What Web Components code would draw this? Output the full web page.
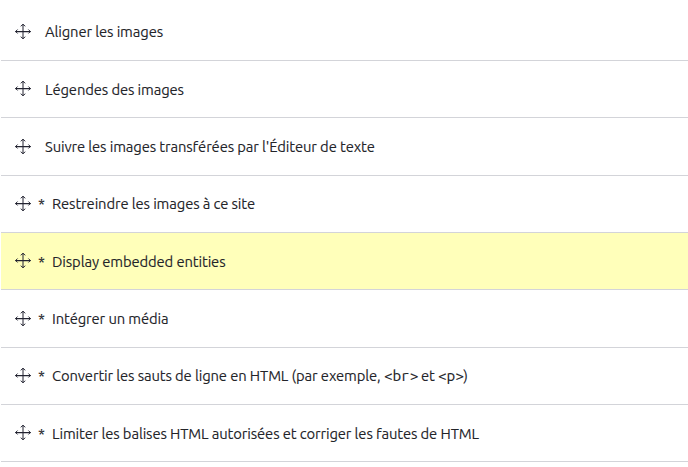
<!DOCTYPE html>
<html lang="fr">
<head>
<meta charset="utf-8">
<title>Filtres</title>
<style>
body{margin:0;background:#fff;color:#232429;font:14.8px/20px Ubuntu,"Noto Sans","Open Sans",sans-serif;letter-spacing:-.12px;-webkit-text-stroke:.1px #232429}
</style>
</head>
<body>
<filter-list>
<filter-row>Aligner les images</filter-row>
<filter-row low>Légendes des images</filter-row>
<filter-row>Suivre les images transférées par l'Éditeur de texte</filter-row>
<filter-row changed>Restreindre les images à ce site</filter-row>
<filter-row changed low active>Display embedded entities</filter-row>
<filter-row changed>Intégrer un média</filter-row>
<filter-row changed>Convertir les sauts de ligne en HTML (par exemple, <code-tag>&lt;br&gt;</code-tag> et <code-tag>&lt;p&gt;</code-tag>)</filter-row>
<filter-row changed low>Limiter les balises HTML autorisées et corriger les fautes de HTML</filter-row>
</filter-list>
<script>
class CodeTag extends HTMLElement{
  constructor(){
    super();
    this.attachShadow({mode:'open'}).innerHTML=`<style>
    :host{display:inline;font:15.5px/1 "Ubuntu Mono","DejaVu Sans Mono",monospace;letter-spacing:-.1px;margin-right:-.5px}
    </style><slot></slot>`;
  }
}
class DragHandle extends HTMLElement{
  constructor(){
    super();
    this.attachShadow({mode:'open'}).innerHTML=`<style>
    :host{display:block;width:17px;height:17px}
    svg{display:block}
    </style>
    <svg width="17" height="17" viewBox="0 0 17 17" fill="none" stroke="#222330" stroke-linecap="round" stroke-linejoin="round">
    <path stroke-width="1.25" d="M.8 8.5H15.2"/>
    <path d="M8 1.4V15.6"/>
    <path stroke-width=".95" d="M2.3 6.8L.6 8.5L2.3 10.2M13.7 6.8L15.4 8.5L13.7 10.2M6 3L8 1.3L10 3M6 14L8 15.7L10 14"/>
    </svg>`;
  }
}
class FilterRow extends HTMLElement{
  constructor(){
    super();
    this.attachShadow({mode:'open'}).innerHTML=`<style>
    :host{display:flex;box-sizing:border-box;align-items:flex-end;border-bottom:1px solid #d3d4d9;padding:0 0 20px 14px}
    :host([active]){background:#ffffba}
    .mark{display:none;width:14px;padding-left:6px;box-sizing:border-box;line-height:20px;margin-bottom:-2px}
    :host([changed]) .mark{display:block}
    .text{white-space:nowrap;margin:0 0 -2px 13px}
    :host([changed]) .text{margin-left:6px}
    :host([low]) .text,:host([low]) .mark{margin-bottom:-3px}
    </style><drag-handle></drag-handle><span class="mark">*</span><span class="text"><slot></slot></span>`;
  }
}
class FilterList extends HTMLElement{
  constructor(){
    super();
    this.attachShadow({mode:'open'}).innerHTML=`<style>
    :host{display:grid;grid-template-rows:61px 57px 58px 57px 57px 58px 57px 57px;margin-left:1px;height:467px;align-content:start}
    </style><slot></slot>`;
  }
}
customElements.define('code-tag',CodeTag);
customElements.define('drag-handle',DragHandle);
customElements.define('filter-row',FilterRow);
customElements.define('filter-list',FilterList);
</script>
</body>
</html>
